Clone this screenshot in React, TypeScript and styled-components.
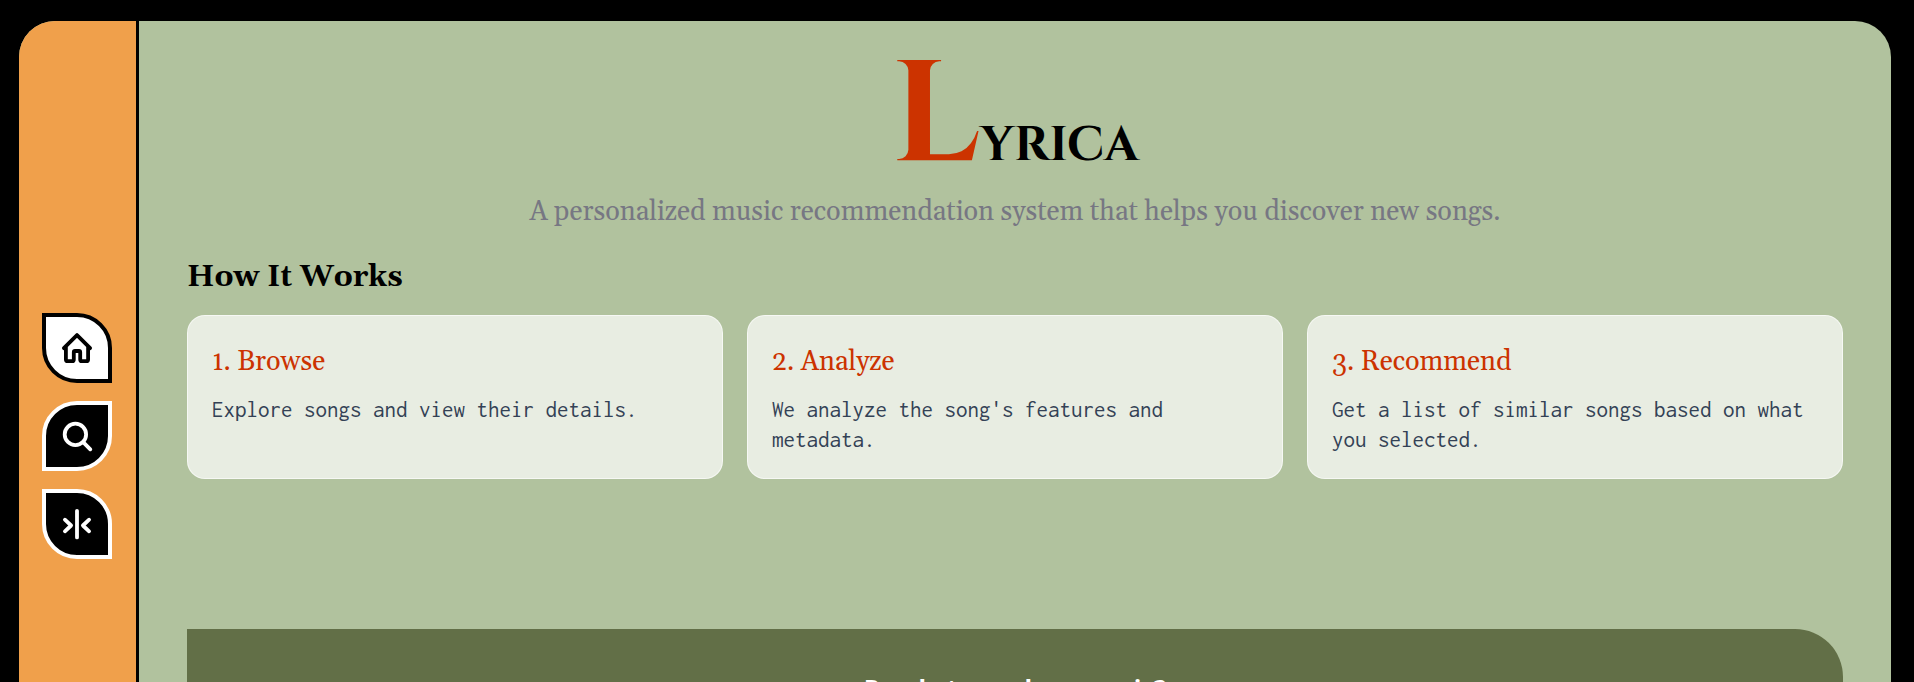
import React from "react";
import styled, { createGlobalStyle } from "styled-components";

const serif = `Georgia, Gelasio, "Liberation Serif", serif`;

const GlobalStyle = createGlobalStyle`
  *, *::before, *::after { box-sizing: border-box; }
  body { margin: 0; background: #000; color: #000; font-family: ${serif}; }
  h1, h2, h3, p { margin: 0; }
`;

const Page = styled.div`
  min-height: 100vh;
  padding: 21px 23px 21px 19px;
`;

const Frame = styled.div`
  display: flex;
  min-height: 830px;
  border-radius: 36px;
  overflow: hidden;
  background: #b1c29e;
`;

const Sidebar = styled.nav`
  flex: 0 0 120px;
  display: flex;
  flex-direction: column;
  justify-content: center;
  gap: 18px;
  padding-left: 23px;
  background: #f0a04b;
  border-right: 3px solid #000;
`;

const NavLink = styled.a<{ $active?: boolean; $flip?: boolean }>`
  display: flex;
  align-items: center;
  justify-content: center;
  width: 70px;
  height: 70px;
  border: 4px solid ${(p) => (p.$active ? "#000" : "#fff")};
  border-radius: ${(p) => (p.$flip ? "50% 0 50% 0" : "0 50% 0 50%")};
  background: ${(p) => (p.$active ? "#fff" : "#000")};
  color: ${(p) => (p.$active ? "#000" : "#fff")};
`;

const Icon = styled.svg`
  width: 32px;
  height: 32px;
  fill: none;
  stroke: currentColor;
  stroke-width: 3.8;
  stroke-linecap: round;
  stroke-linejoin: round;
`;

const Main = styled.main`
  flex: 1;
  min-width: 0;
  padding: 24px 48px 48px;
`;

const Hero = styled.header`
  text-align: center;
`;

const Title = styled.h1`
  font-family: Cinzel, "Liberation Serif", serif;
  font-size: 48px;
  font-weight: 700;
  line-height: 48px;
  text-transform: uppercase;
`;

const Initial = styled.span`
  font-size: 144px;
  line-height: 144px;
  color: #cc3300;
`;

const Tagline = styled.p`
  font-size: 27px;
  line-height: 46px;
  color: #777783;
`;

const SectionTitle = styled.h2`
  margin: 18px 0 14px;
  font-size: 30px;
  font-weight: 700;
  line-height: 48px;
`;

const Steps = styled.div`
  display: grid;
  grid-template-columns: repeat(3, 1fr);
  gap: 24px;
`;

const Card = styled.article`
  padding: 24px;
  border: 1px solid rgba(255, 255, 255, 0.6);
  border-radius: 18px;
  background: rgba(255, 255, 255, 0.7);
`;

const CardTitle = styled.h3`
  margin-bottom: 10px;
  font-size: 27px;
  font-weight: 400;
  line-height: 44px;
  color: #cc3300;
`;

const CardText = styled.p`
  font-family: Consolas, Inconsolata, "Liberation Mono", monospace;
  font-size: 23px;
  line-height: 30px;
  color: #334155;
`;

const Banner = styled.section`
  margin-top: 150px;
  padding: 42px 48px 48px;
  border-radius: 0 48px 0 48px;
  background: #626f47;
  color: #fff;
  text-align: center;
`;

const BannerTitle = styled.h2`
  font-family: "Open Sans", sans-serif;
  font-size: 25px;
  font-weight: 700;
  line-height: 34px;
`;

const steps = [
  { title: "1. Browse", text: "Explore songs and view their details." },
  { title: "2. Analyze", text: "We analyze the song's features and metadata." },
  { title: "3. Recommend", text: "Get a list of similar songs based on what you selected." },
];

export default function App() {
  return (
    <Page>
      <GlobalStyle />
      <Frame>
        <Sidebar aria-label="Main">
          <NavLink href="#home" aria-label="Home" aria-current="page" $active>
            <Icon viewBox="0 0 32 32" aria-hidden="true">
              <path d="M2.9 16.2 16 3.1 29.1 16.2M4.9 15v12.4c0 1.2.7 1.8 1.8 1.8h4.4c1.1 0 1.7-.6 1.7-1.8v-7.2c0-.8.4-1.2 1.2-1.2h4c.8 0 1.2.4 1.2 1.2v7.2c0 1.2.6 1.8 1.7 1.8h4.4c1.1 0 1.8-.6 1.8-1.8V15" />
            </Icon>
          </NavLink>
          <NavLink href="#search" aria-label="Search" $flip>
            <Icon viewBox="0 0 32 32" aria-hidden="true">
              <circle cx="14.4" cy="14.4" r="10.7" />
              <path d="m22.4 22.4 6.9 6.9" />
            </Icon>
          </NavLink>
          <NavLink href="#compare" aria-label="Compare">
            <Icon viewBox="0 0 32 32" aria-hidden="true">
              <path d="M16 2.8v26.6M3.9 11.7l6.2 5.8-6.2 5.8M28.1 11.7l-6.2 5.8 6.2 5.8" />
            </Icon>
          </NavLink>
        </Sidebar>
        <Main>
          <Hero>
            <Title>
              <Initial>L</Initial>yrica
            </Title>
            <Tagline>
              A personalized music recommendation system that helps you discover new songs.
            </Tagline>
          </Hero>
          <SectionTitle>How It Works</SectionTitle>
          <Steps>
            {steps.map((s) => (
              <Card key={s.title}>
                <CardTitle>{s.title}</CardTitle>
                <CardText>{s.text}</CardText>
              </Card>
            ))}
          </Steps>
          <Banner>
            <BannerTitle>Ready to explore music?</BannerTitle>
          </Banner>
        </Main>
      </Frame>
    </Page>
  );
}
